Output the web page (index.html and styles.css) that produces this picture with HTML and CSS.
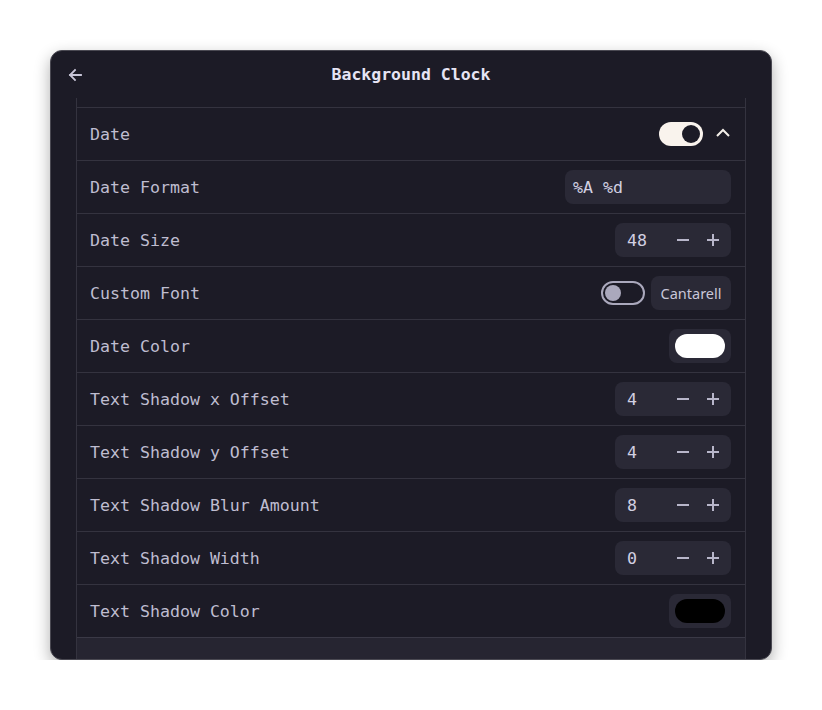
FILE: index.html
```html
<!DOCTYPE html>
<html>
<head>
<meta charset="utf-8">
<link rel="stylesheet" href="styles.css">
</head>
<body>
<div class="window">
  <div class="header">
    <svg class="back" width="16" height="16" viewBox="0 0 16 16"><path d="M14 8H3M8 3L3 8l5 5" fill="none" stroke="#c8c6d8" stroke-width="1.8" stroke-linecap="square"/></svg>
    <div class="title">Background Clock</div>
  </div>
  <div class="scroll">
    <div class="list">
      <div class="stub"></div>
      <div class="row">
        <span class="label">Date</span>
        <div class="controls gap12">
          <div class="switch on"><div class="knob"></div></div>
          <svg class="chev" width="16" height="14" viewBox="0 0 16 14"><path d="M2 10l6-6 6 6" fill="none" stroke="#f4efe9" stroke-width="2"/></svg>
        </div>
      </div>
      <div class="row">
        <span class="label">Date Format</span>
        <div class="entry">%A %d</div>
      </div>
      <div class="row">
        <span class="label">Date Size</span>
        <div class="spin"><span class="val">48</span><svg class="op" width="14" height="14" viewBox="0 0 14 14"><path d="M1 7h12" stroke="#b8b6ca" stroke-width="2"/></svg><svg class="op" width="14" height="14" viewBox="0 0 14 14"><path d="M1 7h12M7 1v12" stroke="#b8b6ca" stroke-width="2"/></svg></div>
      </div>
      <div class="row">
        <span class="label">Custom Font</span>
        <div class="controls gap6">
          <div class="switch off"><div class="knob"></div></div>
          <div class="fontbtn">Cantarell</div>
        </div>
      </div>
      <div class="row">
        <span class="label">Date Color</span>
        <div class="colorbtn"><div class="swatch white"></div></div>
      </div>
      <div class="row">
        <span class="label">Text Shadow x Offset</span>
        <div class="spin"><span class="val">4</span><svg class="op" width="14" height="14" viewBox="0 0 14 14"><path d="M1 7h12" stroke="#b8b6ca" stroke-width="2"/></svg><svg class="op" width="14" height="14" viewBox="0 0 14 14"><path d="M1 7h12M7 1v12" stroke="#b8b6ca" stroke-width="2"/></svg></div>
      </div>
      <div class="row">
        <span class="label">Text Shadow y Offset</span>
        <div class="spin"><span class="val">4</span><svg class="op" width="14" height="14" viewBox="0 0 14 14"><path d="M1 7h12" stroke="#b8b6ca" stroke-width="2"/></svg><svg class="op" width="14" height="14" viewBox="0 0 14 14"><path d="M1 7h12M7 1v12" stroke="#b8b6ca" stroke-width="2"/></svg></div>
      </div>
      <div class="row">
        <span class="label">Text Shadow Blur Amount</span>
        <div class="spin"><span class="val">8</span><svg class="op" width="14" height="14" viewBox="0 0 14 14"><path d="M1 7h12" stroke="#b8b6ca" stroke-width="2"/></svg><svg class="op" width="14" height="14" viewBox="0 0 14 14"><path d="M1 7h12M7 1v12" stroke="#b8b6ca" stroke-width="2"/></svg></div>
      </div>
      <div class="row">
        <span class="label">Text Shadow Width</span>
        <div class="spin"><span class="val">0</span><svg class="op" width="14" height="14" viewBox="0 0 14 14"><path d="M1 7h12" stroke="#b8b6ca" stroke-width="2"/></svg><svg class="op" width="14" height="14" viewBox="0 0 14 14"><path d="M1 7h12M7 1v12" stroke="#b8b6ca" stroke-width="2"/></svg></div>
      </div>
      <div class="row">
        <span class="label">Text Shadow Color</span>
        <div class="colorbtn"><div class="swatch black"></div></div>
      </div>
      <div class="row next"></div>
    </div>
  </div>
</div>
</body>
</html>
```
FILE: styles.css
```css
html, body {
  margin: 0;
  padding: 0;
  background: #ffffff;
}
body {
  padding: 50px 0 0 50px;
  font-family: "DejaVu Sans Mono", "Liberation Mono", monospace;
}
.window {
  width: 720px;
  height: 608px;
  border: 1px solid #4a4952;
  border-radius: 12px;
  background: #1c1b26;
  box-shadow: 0 6px 16px rgba(0, 0, 0, 0.32);
  display: flex;
  flex-direction: column;
  overflow: hidden;
}
.header {
  height: 47px;
  flex: none;
  display: flex;
  align-items: center;
  justify-content: center;
  position: relative;
}
.back {
  position: absolute;
  left: 16px;
  top: 16px;
}
.title {
  color: #e6e4f4;
  font-weight: bold;
  font-size: 16.5px;
}
.scroll {
  flex: 1;
  overflow: hidden;
  padding: 0 25px;
}
.list {
  border-left: 1px solid #34333f;
  border-right: 1px solid #34333f;
}
.stub {
  height: 9px;
}
.row {
  height: 52px;
  border-top: 1px solid #34333f;
  display: flex;
  align-items: center;
  justify-content: space-between;
  padding: 0 14px 0 13px;
}
.row.next {
  background: #262531;
  border-top-color: #3a3946;
}
.label {
  color: #bfbdd0;
  font-size: 16.6px;
}
.controls {
  display: flex;
  align-items: center;
}
.gap12 { gap: 12px; }
.gap6 { gap: 6px; }
.switch {
  width: 44px;
  height: 24px;
  border-radius: 12px;
  box-sizing: border-box;
  position: relative;
}
.switch.on {
  background: #f9f3ed;
}
.switch.on .knob {
  position: absolute;
  right: 3px;
  top: 3px;
  width: 18px;
  height: 18px;
  border-radius: 50%;
  background: #1c1b26;
}
.switch.off {
  border: 2px solid #aaa8bc;
}
.switch.off .knob {
  position: absolute;
  left: 2px;
  top: 2px;
  width: 16px;
  height: 16px;
  border-radius: 50%;
  background: #aaa8bc;
}
.chev {
  display: block;
  margin-top: -2px;
}
.entry {
  width: 166px;
  height: 34px;
  box-sizing: border-box;
  background: #2a2936;
  border-radius: 8px;
  padding-left: 8px;
  display: flex;
  align-items: center;
  color: #d2d0e2;
  font-size: 16.6px;
}
.spin {
  width: 116px;
  height: 34px;
  box-sizing: border-box;
  background: #2a2936;
  border-radius: 8px;
  display: flex;
  align-items: center;
  padding-left: 12px;
}
.val {
  color: #d2d0e2;
  font-size: 16.6px;
  flex: 1;
}
.op {
  display: block;
  margin-right: 16px;
}
.op + .op {
  margin-right: 11px;
}
.fontbtn {
  width: 80px;
  height: 34px;
  box-sizing: border-box;
  background: #2a2936;
  border-radius: 8px;
  display: flex;
  align-items: center;
  justify-content: center;
  color: #c8c6d8;
  font-family: "Noto Sans", "Open Sans", sans-serif;
  font-size: 14.5px;
}
.colorbtn {
  width: 62px;
  height: 34px;
  box-sizing: border-box;
  background: #2a2936;
  border-radius: 8px;
  display: flex;
  align-items: center;
  justify-content: center;
}
.swatch {
  width: 50px;
  height: 24px;
  border-radius: 12px;
}
.swatch.white { background: #ffffff; }
.swatch.black { background: #000000; }
```
